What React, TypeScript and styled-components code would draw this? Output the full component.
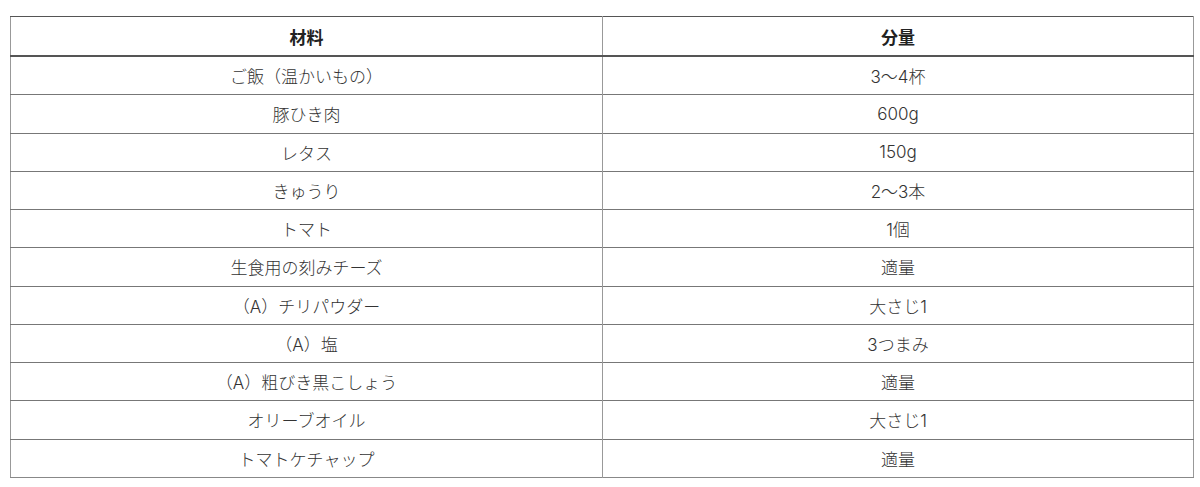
import React from "react";
import styled, { createGlobalStyle } from "styled-components";

const Global = createGlobalStyle`
  body {
    margin: 0;
    background: #fff;
    font-family: Inter, "Noto Sans CJK JP", sans-serif;
    color: #333;
  }
`;

const Wrap = styled.div`
  padding: 16px 6px 0 10px;
`;

const Table = styled.table`
  width: 1184px;
  border-collapse: collapse;
  table-layout: fixed;
  border-top: 1px solid #555;
  border-left: 1px solid #999;
  border-right: 1px solid #999;
  border-bottom: 1px solid #888;
`;

const Th = styled.th`
  height: 38px;
  padding: 0;
  font-size: 17px;
  font-weight: 700;
  color: #222;
  text-align: center;
  border-bottom: 2px solid #555;
  border-left: 1px solid #999;
  &:first-child {
    border-left: none;
  }
`;

const Td = styled.td`
  height: 37.25px;
  padding: 0;
  font-size: 17px;
  font-weight: 300;
  color: #333;
  text-align: center;
  border-top: 1px solid #777;
  border-left: 1px solid #999;
  &:first-child {
    border-left: none;
  }
`;

const rows: [string, string][] = [
  ["ご飯（温かいもの）", "3〜4杯"],
  ["豚ひき肉", "600g"],
  ["レタス", "150g"],
  ["きゅうり", "2〜3本"],
  ["トマト", "1個"],
  ["生食用の刻みチーズ", "適量"],
  ["（A）チリパウダー", "大さじ1"],
  ["（A）塩", "3つまみ"],
  ["（A）粗びき黒こしょう", "適量"],
  ["オリーブオイル", "大さじ1"],
  ["トマトケチャップ", "適量"],
];

export default function App() {
  return (
    <>
      <Global />
      <Wrap>
        <Table>
          <colgroup>
            <col style={{ width: 592 }} />
            <col />
          </colgroup>
          <thead>
            <tr>
              <Th>材料</Th>
              <Th>分量</Th>
            </tr>
          </thead>
          <tbody>
            {rows.map(([name, amount]) => (
              <tr key={name}>
                <Td>{name}</Td>
                <Td>{amount}</Td>
              </tr>
            ))}
          </tbody>
        </Table>
      </Wrap>
    </>
  );
}
